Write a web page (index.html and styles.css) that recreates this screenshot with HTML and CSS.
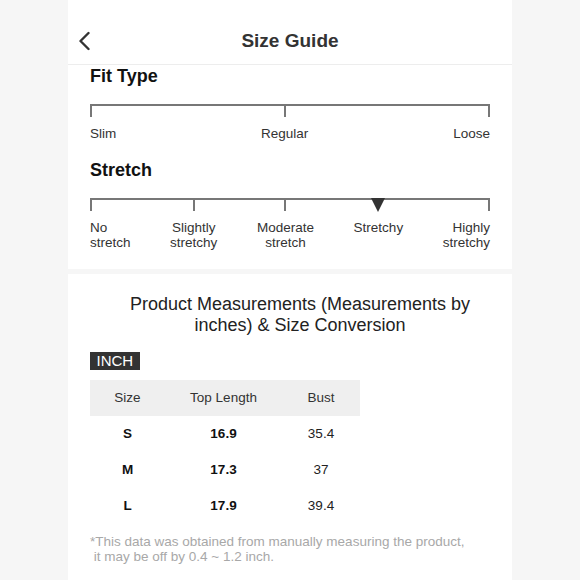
FILE: index.html
```html
<!DOCTYPE html>
<html lang="en">
<head>
<meta charset="utf-8">
<title>Size Guide</title>
<link rel="stylesheet" href="styles.css">
</head>
<body>
<div class="panel">
  <header class="topbar">
    <span class="back" aria-label="Back">
      <svg width="12" height="20" viewBox="0 0 12 20"><path d="M10.5 2 L2.5 10 L10.5 18" fill="none" stroke="#333" stroke-width="2.4" stroke-linecap="round" stroke-linejoin="round"/></svg>
    </span>
    <h1 class="title">Size Guide</h1>
    <span></span>
  </header>

  <section class="card fit-card">
    <h2 class="sec-title">Fit Type</h2>
    <div class="scale">
      <div class="step first"><span class="mark"><i class="tick"></i></span><span class="lbl">Slim</span></div>
      <div class="step"><span class="mark"><i class="tick"></i></span><span class="lbl">Regular</span></div>
      <div class="step last"><span class="mark"><i class="tick"></i></span><span class="lbl">Loose</span></div>
    </div>

    <h2 class="sec-title">Stretch</h2>
    <div class="scale">
      <div class="step first"><span class="mark"><i class="tick"></i></span><span class="lbl">No<br>stretch</span></div>
      <div class="step"><span class="mark"><i class="tick"></i></span><span class="lbl">Slightly<br>stretchy</span></div>
      <div class="step"><span class="mark"><i class="tick"></i></span><span class="lbl">Moderate<br>stretch</span></div>
      <div class="step"><span class="mark"><i class="pointer"></i></span><span class="lbl">Stretchy</span></div>
      <div class="step last"><span class="mark"><i class="tick"></i></span><span class="lbl">Highly<br>stretchy</span></div>
    </div>
  </section>

  <section class="card measure-card">
    <h2 class="m-title">Product Measurements (Measurements by<br>inches) &amp; Size Conversion</h2>
    <span class="unit">INCH</span>
    <table class="sizes">
      <thead>
        <tr><th class="c1">Size</th><th class="c2">Top Length</th><th class="c3">Bust</th></tr>
      </thead>
      <tbody>
        <tr><td class="b">S</td><td class="b">16.9</td><td>35.4</td></tr>
        <tr><td class="b">M</td><td class="b">17.3</td><td>37</td></tr>
        <tr><td class="b">L</td><td class="b">17.9</td><td>39.4</td></tr>
      </tbody>
    </table>
    <p class="note">*This data was obtained from manually measuring the product,<br>&nbsp;it may be off by 0.4 ~ 1.2 inch.</p>
  </section>
</div>
</body>
</html>
```

FILE: styles.css
```css
html, body {
  margin: 0;
  padding: 0;
  background: #f6f6f6;
  font-family: "Liberation Sans", Arial, sans-serif;
  color: #333;
}

.panel {
  width: 444px;
  margin-left: 68px;
  min-height: 580px;
  background: #f6f6f6;
}

.topbar {
  display: grid;
  grid-template-columns: 1fr auto 1fr;
  align-items: center;
  height: 65px;
  box-sizing: border-box;
  padding: 29px 10px 11px 10px;
  background: #fff;
  border-bottom: 1px solid #ededed;
}

.back {
  display: flex;
  align-items: center;
  height: 24px;
}

.title {
  margin: 0;
  font-size: 19px;
  line-height: 24px;
  font-weight: bold;
  color: #333;
}

.card {
  background: #fff;
  padding: 0 22px;
}

.fit-card {
  padding-bottom: 18.5px;
  margin-bottom: 5px;
}

.sec-title {
  margin: 0 0 17px 0;
  font-size: 18px;
  line-height: 22px;
  font-weight: bold;
  color: #111;
}

.scale {
  display: flex;
  justify-content: space-between;
  border-top: 2px solid #777;
  margin-bottom: 18px;
}

.fit-card .scale:last-child {
  margin-bottom: 0;
}

.step {
  display: flex;
  flex-direction: column;
  align-items: center;
  text-align: center;
}

.step.first {
  align-items: flex-start;
  text-align: left;
}

.step.last {
  align-items: flex-end;
  text-align: right;
}

.mark {
  display: block;
  height: 11px;
  position: relative;
}

.tick {
  display: block;
  width: 2px;
  height: 11px;
  background: #777;
}

.pointer {
  display: block;
  position: relative;
  top: -2px;
  width: 0;
  height: 0;
  border-left: 7.5px solid transparent;
  border-right: 7.5px solid transparent;
  border-top: 14px solid #333;
}

.lbl {
  display: block;
  margin-top: 9px;
  font-size: 13.5px;
  line-height: 15px;
  color: #333;
}

.measure-card {
  padding-top: 20px;
  padding-bottom: 40px;
}

.m-title {
  margin: 0 0 16px 0;
  padding-left: 20px;
  font-size: 18px;
  line-height: 21px;
  font-weight: normal;
  text-align: center;
  color: #222;
}

.unit {
  display: inline-block;
  height: 18px;
  line-height: 18px;
  padding: 0 6.5px;
  background: #333;
  color: #fff;
  font-size: 15px;
  vertical-align: top;
}

.sizes {
  margin-top: 10px;
  border-collapse: collapse;
  font-size: 13.5px;
}

.sizes th,
.sizes td {
  height: 36px;
  padding: 0;
  text-align: center;
  vertical-align: middle;
}

.sizes th {
  background: #efefef;
  font-weight: normal;
  color: #333;
}

.sizes .c1 { width: 75px; }
.sizes .c2 { width: 117px; }
.sizes .c3 { width: 78px; }

.sizes td {
  color: #222;
}

.sizes td.b {
  font-weight: bold;
  color: #111;
}

.note {
  margin: 10px 0 0 0;
  font-size: 13.5px;
  line-height: 15px;
  color: #a8a8a8;
}
```
